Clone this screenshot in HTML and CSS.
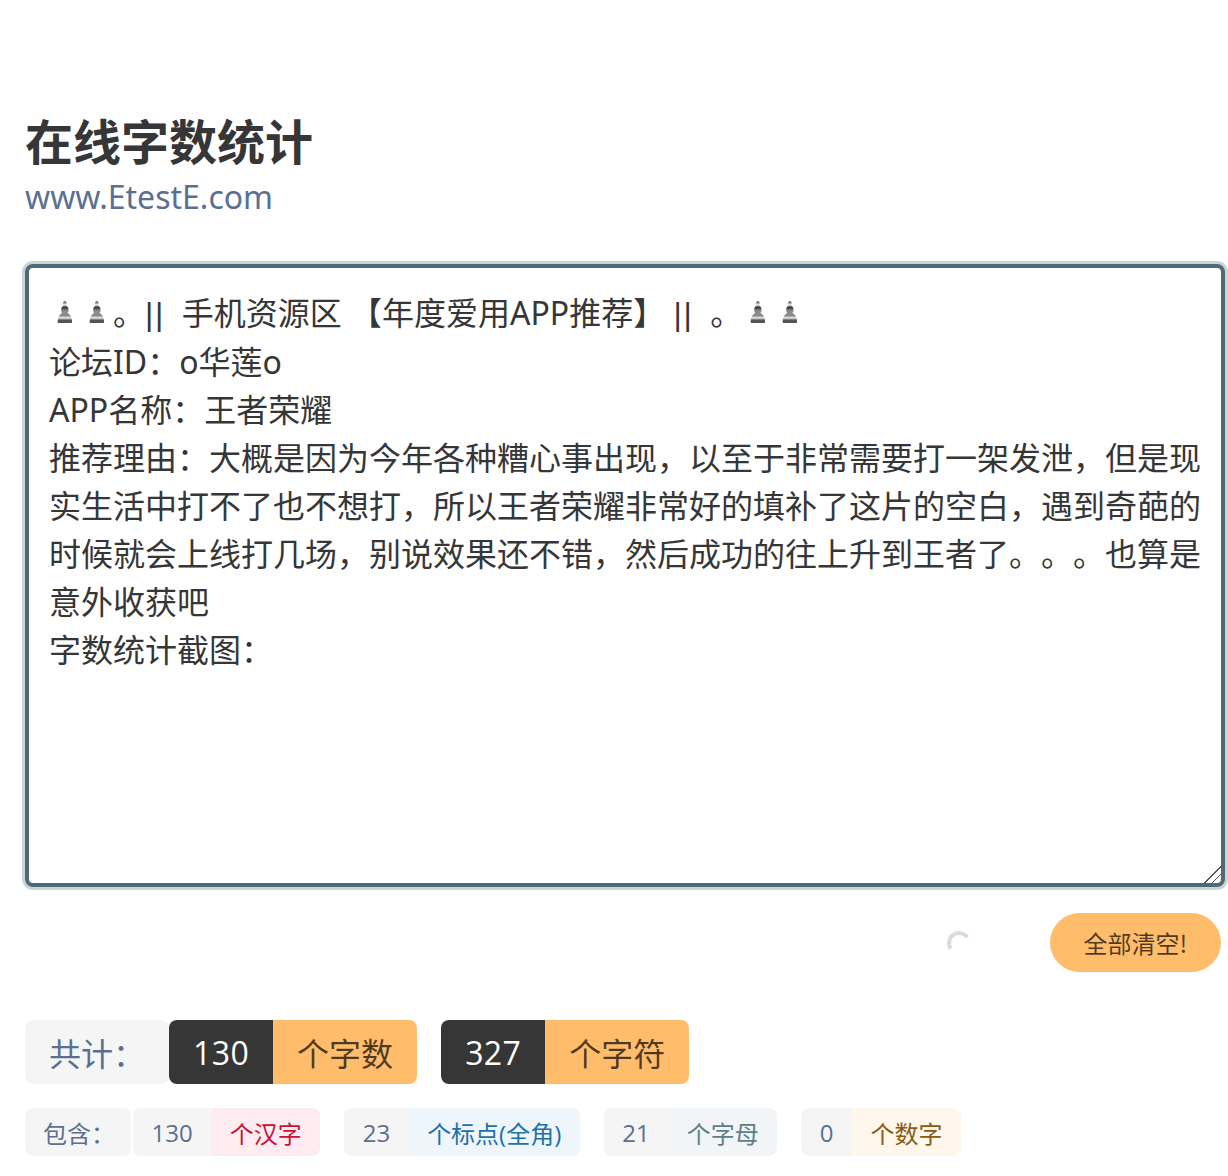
FILE: index.html
```html
<!DOCTYPE html>
<html lang="zh-CN">
<head>
  <meta charset="utf-8">
  <title>在线字数统计</title>
  <link rel="stylesheet" href="styles.css">
</head>
<body>

  <!-- 标题 -->
  <div class="header">
    <h1 class="title">在线字数统计</h1>
    <p class="subtitle">www.EtestE.com</p>
  </div>

  <div class="input-box" contenteditable="true" spellcheck="false"><span class="pawn">♟</span><span class="pawn">♟</span>。<span class="pipe">||</span>  手机资源区 【年度爱用APP推荐】 <span class="pipe">||</span>  。<span class="pawn">♟</span><span class="pawn">♟</span>
论坛ID：o华莲o
APP名称：王者荣耀
推荐理由：大概是因为今年各种糟心事出现，以至于非常需要打一架发泄，但是现实生活中打不了也不想打，所以王者荣耀非常好的填补了这片的空白，遇到奇葩的时候就会上线打几场，别说效果还不错，然后成功的往上升到王者了。。。也算是意外收获吧
字数统计截图：</div>

  <div class="actions">
    <span class="spinner"></span>
    <button class="btn-clear">全部清空!</button>
  </div>

  <!-- 统计 -->
  <div class="stats stats-total">
    <span class="tag">共计：</span>
    <div class="group">
      <span class="tag tag-dark">130</span>
      <span class="tag tag-warning">个字数</span>
    </div>
    <div class="group">
      <span class="tag tag-dark">327</span>
      <span class="tag tag-warning">个字符</span>
    </div>
  </div>

  <div class="stats stats-detail">
    <span class="tag tag-label">包含：</span>
    <div class="group">
      <span class="tag">130</span>
      <span class="tag tag-danger">个汉字</span>
    </div>
    <div class="group">
      <span class="tag">23</span>
      <span class="tag tag-info">个标点(全角)</span>
    </div>
    <div class="group">
      <span class="tag">21</span>
      <span class="tag tag-light">个字母</span>
    </div>
    <div class="group">
      <span class="tag">0</span>
      <span class="tag tag-orange">个数字</span>
    </div>
  </div>

</body>
</html>
```

FILE: styles.css
```css
* {
  box-sizing: border-box;
}

html, body {
  overflow: hidden;
}

body {
  margin: 0;
  padding: 107px 0 0 25px;
  background-color: white;
  font-family: "Open Sans", "Noto Sans CJK SC", sans-serif;
  color: #363636;
  text-spacing-trim: space-all;
}

.header {
  margin-bottom: 45px;
}

.title {
  margin: 0 0 4px;
  font-size: 48px;
  line-height: 64px;
  font-weight: 700;
  font-family: "Noto Sans CJK SC", sans-serif;
}

.subtitle {
  margin: 0;
  font-size: 32px;
  line-height: 44px;
  color: #5b6f91;
  font-family: "Noto Sans", sans-serif;
}

.input-box {
  position: relative;
  width: 1200px;
  height: 623px;
  padding: 21px 20px;
  border: 4px solid #4f6a74;
  border-radius: 8px;
  box-shadow: 0 0 0 3px #c9d6d9;
  outline: none;
  font-family: "Noto Sans", "Noto Sans CJK SC", sans-serif;
  font-size: 32px;
  line-height: 48px;
  color: #363636;
  background: white;
  white-space: pre-wrap;
}

/* 右下角拖动手柄 */
.input-box::after {
  content: "";
  position: absolute;
  right: 0;
  bottom: 0;
  width: 17px;
  height: 17px;
  background: linear-gradient(135deg, transparent 50%, #555 50%, #555 54%, transparent 54%, transparent 72%, #555 72%, #555 76%, transparent 76%);
}

.pawn {
  display: inline-block;
  width: 32px;
  height: 48px;
  text-align: center;
  vertical-align: top;
  font-family: "DejaVu Sans", sans-serif;
  font-size: 30px;
  color: transparent;
  background: linear-gradient(#333 25%, #eee 33%, #333 38%, #8a8a8a 45%, #8a8a8a 56%, #eee 60%, #555 65%);
  -webkit-background-clip: text;
  background-clip: text;
  transform: scaleX(0.8);
}

.pipe {
  font-family: "Liberation Sans", sans-serif;
  letter-spacing: 1.7px;
}

.actions {
  display: flex;
  justify-content: flex-end;
  align-items: center;
  width: 1196px;
  margin-top: 26px;
}

.spinner {
  width: 24px;
  height: 24px;
  margin-right: 79px;
  border: 4px solid transparent;
  border-top-color: #dbdbdb;
  border-left-color: #dbdbdb;
  border-radius: 50%;
  transform: rotate(10deg);
}

.btn-clear {
  width: 171px;
  height: 59px;
  border: none;
  border-radius: 30px;
  background-color: #ffbc6b;
  color: rgba(0, 0, 0, 0.7);
  font-family: "Noto Sans CJK SC", sans-serif;
  font-size: 24px;
}

.stats {
  display: flex;
  align-items: center;
}

.stats-total {
  margin-top: 48px;
}

.stats-total .group + .group {
  margin-left: 24px;
}

.stats-total .tag {
  height: 64px;
  padding: 0 24px;
  font-size: 32px;
}

.stats-total .tag-dark {
  letter-spacing: 0.4px;
}

.stats-detail {
  margin-top: 24px;
}

.stats-detail .group {
  margin-left: 24px;
}

.stats-detail .tag-label + .group {
  margin-left: 2px;
}

.stats-detail .group .tag:first-child {
  min-width: 50px;
}

.group {
  display: flex;
}

.tag {
  display: inline-flex;
  align-items: center;
  height: 48px;
  padding: 0 18.5px;
  border-radius: 8px;
  background-color: #f5f5f5;
  color: #5b6f91;
  font-size: 24px;
  white-space: nowrap;
}

.tag-label {
  width: 106px;
  padding: 0 0 0 18px;
}

.group .tag:first-child {
  border-top-right-radius: 0;
  border-bottom-right-radius: 0;
}

.group .tag:last-child {
  border-top-left-radius: 0;
  border-bottom-left-radius: 0;
}

.tag-dark {
  background-color: #363636;
  color: white;
}

.tag-warning {
  background-color: #ffbc6b;
  color: rgba(0, 0, 0, 0.7);
}

.tag-danger {
  background-color: #feecf0;
  color: #cc0f35;
}

.tag-info {
  background-color: #eef6fc;
  color: #1d72aa;
}

.tag-light {
  background-color: #f1f5f7;
  color: #5f7f87;
}

.tag-orange {
  background-color: #fff6ec;
  color: #8a5a10;
}
```
